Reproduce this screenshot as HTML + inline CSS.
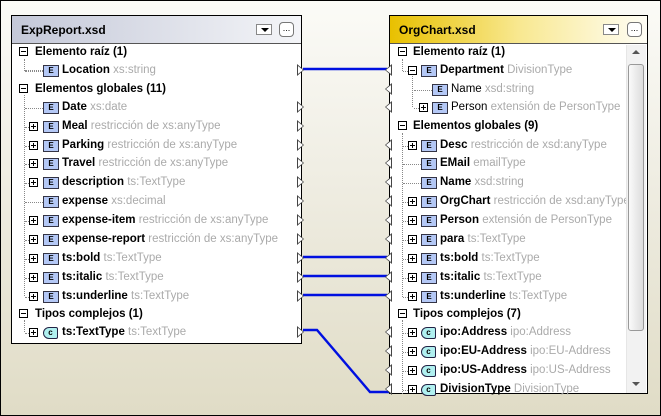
<!DOCTYPE html>
<html><head><meta charset="utf-8"><style>
*{margin:0;padding:0;box-sizing:border-box}
body{width:661px;height:416px;overflow:hidden;position:relative;font-family:"Liberation Sans",sans-serif}
#bg{position:absolute;left:0;top:0;width:661px;height:416px;border:1px solid #000;background:linear-gradient(#fbfbf7,#f0eee4 40%,#e0dcc6)}
.box{position:absolute;background:#fff;border:1px solid #000;overflow:hidden}
.tb{position:absolute;left:0;top:0;right:0;height:28px;border-bottom:1px solid #555;font:bold 12px "Liberation Sans",sans-serif;line-height:28px;padding-left:9px}
.dd{position:absolute;top:8px;width:16px;height:11px;border:1px solid #888;background:#fff}
.dd:after{content:"";position:absolute;left:4px;top:3px;border-left:4px solid transparent;border-right:4px solid transparent;border-top:4px solid #000}
.el{position:absolute;top:6px;width:15px;height:15px;border:1px solid #777;border-radius:4px;background:#fff;font:9px sans-serif;text-align:center;line-height:10px}
.r{position:absolute;height:19px;white-space:nowrap;font:bold 11.5px "Liberation Sans",sans-serif;line-height:19px;color:#000}
.r i{font-style:normal;font-weight:normal;color:#aaa}
.t{position:absolute;width:9px;height:9px;border:1px solid #000;background:#fff}
.t:before{content:"";position:absolute;left:1px;top:3px;width:5px;height:1px;background:#000}
.p:after{content:"";position:absolute;left:3px;top:1px;width:1px;height:5px;background:#000}
.e{position:absolute;width:16px;height:12px;border:1px solid #334;background:#b4c8f6;font:bold 8px sans-serif;line-height:10px;text-align:center;color:#000}
.e:before{content:"E"}
.c{position:absolute;width:15px;height:12px;border:1px solid #224;border-radius:6px 2px 2px 6px;background:#b0f0f0;font:bold 8px sans-serif;line-height:10px;text-align:center}
.c:before{content:"c"}
.v{position:absolute;border-left:1px dotted #888}
.h{position:absolute;border-top:1px dotted #888}
.tri{position:absolute;width:0;height:0;border-top:6px solid transparent;border-bottom:6px solid transparent}
.tr{border-left:7px solid #444}
.tl{border-right:7px solid #444}
.tr:after{content:"";position:absolute;left:-6px;top:-4px;border-top:4px solid transparent;border-bottom:4px solid transparent;border-left:5px solid #fff}
.tl:after{content:"";position:absolute;left:1px;top:-4px;border-top:4px solid transparent;border-bottom:4px solid transparent;border-right:5px solid #fff}
</style></head><body>
<div id="bg"></div>

<svg style="position:absolute;left:0;top:0" width="661" height="416">
<g stroke="#0010e0" stroke-width="2.4" fill="none">
<line x1="303" y1="69" x2="387" y2="69"/>
<line x1="303" y1="257" x2="387" y2="257"/>
<line x1="303" y1="276" x2="387" y2="276"/>
<line x1="303" y1="295" x2="387" y2="295"/>
<polyline points="303,330 317,330 370,392 390,392"/>
</g></svg>

<div class="box" style="left:11px;top:15px;width:291px;height:329px">
<div class="tb" style="background:linear-gradient(90deg,#c4c8d8,#f4f5f8)">ExpReport.xsd
<div class="dd" style="left:244px"></div><div class="el" style="left:267px">...</div></div>
</div>
<div class="v" style="left:24px;top:59px;height:12px"></div>
<div class="h" style="left:25px;top:70px;width:18px"></div>
<div class="v" style="left:24px;top:95px;height:201px"></div>
<div class="v" style="left:24px;top:320px;height:12px"></div>

<div id="L"></div>

<div class="box" style="left:389px;top:15px;width:259px;height:379px">
<div class="tb" style="background:linear-gradient(90deg,#e8c000,#f8e890 50%,#fffef6)">OrgChart.xsd
<div class="dd" style="left:213px"></div><div class="el" style="left:237px">...</div></div>
<div style="position:absolute;left:236px;top:29px;width:20px;height:349px;background:#f2f2f2;border-left:1px solid #e6e6e6"></div>
<div style="position:absolute;left:238px;top:48px;width:16px;height:267px;background:linear-gradient(90deg,#fafafa,#ddd);border:1px solid #999;border-radius:3px"></div>
<div style="position:absolute;left:242px;top:34px;border-left:4px solid transparent;border-right:4px solid transparent;border-bottom:4px solid #555"></div>
<div style="position:absolute;left:242px;top:366px;border-left:4px solid transparent;border-right:4px solid transparent;border-top:4px solid #555"></div>
</div>
<div class="v" style="left:402px;top:59px;height:12px"></div>
<div class="v" style="left:402px;top:133px;height:164px"></div>
<div class="v" style="left:402px;top:320px;height:74px"></div>
<div class="v" style="left:412px;top:76px;height:31px"></div>
<div id="R"></div>

<script>
var L=[
[52,0,'-','Elemento raíz (1)',''],
[70,1,'','Location','xs:string','e'],
[89,0,'-','Elementos globales (11)',''],
[107,1,'','Date','xs:date','e'],
[126,1,'+','Meal','restricción de xs:anyType','e'],
[145,1,'+','Parking','restricción de xs:anyType','e'],
[163,1,'+','Travel','restricción de xs:anyType','e'],
[182,1,'+','description','ts:TextType','e'],
[201,1,'','expense','xs:decimal','e'],
[220,1,'+','expense-item','restricción de xs:anyType','e'],
[239,1,'+','expense-report','restricción de xs:anyType','e'],
[258,1,'+','ts:bold','ts:TextType','e'],
[277,1,'+','ts:italic','ts:TextType','e'],
[296,1,'+','ts:underline','ts:TextType','e'],
[314,0,'-','Tipos complejos (1)',''],
[332,1,'+','ts:TextType','ts:TextType','c']];
var h='';
L.forEach(function(a){var y=a[0];
if(a[1]==0){h+='<div class="t" style="left:19px;top:'+(y-5)+'px"></div><div class="r" style="left:35px;top:'+(y-9)+'px">'+a[3]+'</div>';}
else{if(a[2]=='+')h+='<div class="t p" style="left:29px;top:'+(y-4)+'px"></div><div class="h" style="left:25px;top:'+(y+1)+'px;width:4px"></div>';else h+='<div class="h" style="left:25px;top:'+(y+1)+'px;width:18px"></div>';
h+='<div class="'+a[5]+'" style="left:43px;top:'+(y-5)+'px"></div><div class="r" style="left:62px;top:'+(y-9)+'px">'+a[3]+' <i>'+a[4]+'</i></div><div class="tri tr" style="left:297px;top:'+(y-6)+'px"></div>';}
});
document.getElementById('L').innerHTML=h;
var R=[
[52,0,'-','Elemento raíz (1)',''],
[70,1,'-','Department','DivisionType','e'],
[89,2,'','Name','xsd:string','e'],
[107,2,'+','Person','extensión de PersonType','e'],
[126,0,'-','Elementos globales (9)',''],
[145,1,'+','Desc','restricción de xsd:anyType','e'],
[163,1,'','EMail','emailType','e'],
[182,1,'','Name','xsd:string','e'],
[201,1,'+','OrgChart','restricción de xsd:anyType','e'],
[220,1,'+','Person','extensión de PersonType','e'],
[239,1,'+','para','ts:TextType','e'],
[258,1,'+','ts:bold','ts:TextType','e'],
[277,1,'+','ts:italic','ts:TextType','e'],
[296,1,'+','ts:underline','ts:TextType','e'],
[314,0,'-','Tipos complejos (7)',''],
[332,1,'+','ipo:Address','ipo:Address','c'],
[351,1,'+','ipo:EU-Address','ipo:EU-Address','c'],
[370,1,'+','ipo:US-Address','ipo:US-Address','c'],
[389,1,'+','DivisionType','DivisionType','c']];
h='';
R.forEach(function(a){var y=a[0];
if(a[1]==0){h+='<div class="t" style="left:398px;top:'+(y-5)+'px"></div><div class="r" style="left:413px;top:'+(y-9)+'px">'+a[3]+'</div>';return;}
var o=a[1]==2?11:0;
if(a[2])h+='<div class="t'+(a[2]=='+'?' p':'')+'" style="left:'+(408+o)+'px;top:'+(y-4)+'px"></div><div class="h" style="left:'+(403+o)+'px;top:'+(y+1)+'px;width:5px"></div>';else h+='<div class="h" style="left:'+(403+o)+'px;top:'+(y+1)+'px;width:18px"></div>';
var fw=a[1]==2?'font-weight:normal;':'';
h+='<div class="'+a[5]+'" style="left:'+(421+o)+'px;top:'+(y-5)+'px"></div><div class="r" style="'+fw+'left:'+(440+o)+'px;top:'+(y-9)+'px;max-width:'+(186-o)+'px;overflow:hidden">'+a[3]+' <i>'+a[4]+'</i></div><div class="tri tl" style="left:385px;top:'+(y-6)+'px"></div>';
});
document.getElementById('R').innerHTML=h;
</script>
</body></html>
